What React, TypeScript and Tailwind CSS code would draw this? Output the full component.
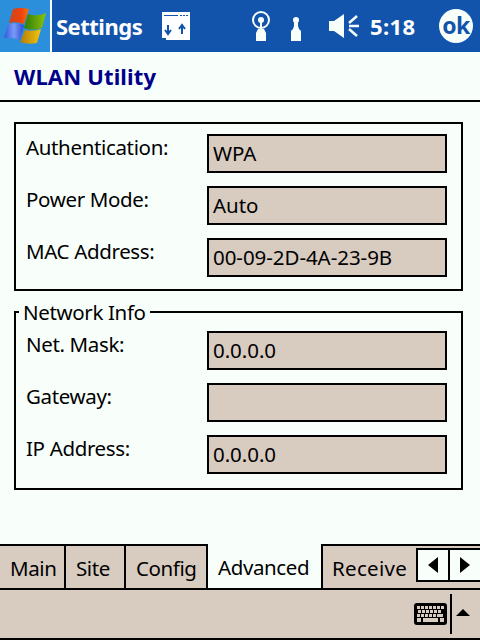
const font = "font-['Noto_Sans',sans-serif]";

const topFields = [
  { label: "Authentication:", value: "WPA" },
  { label: "Power Mode:", value: "Auto" },
  { label: "MAC Address:", value: "00-09-2D-4A-23-9B" },
];

const infoFields = [
  { label: "Net. Mask:", value: "0.0.0.0" },
  { label: "Gateway:", value: "" },
  { label: "IP Address:", value: "0.0.0.0" },
];

function Field({ label, value }: { label: string; value: string }) {
  return (
    <div className="flex h-[39px] items-start justify-between">
      <span className="text-[20.5px] leading-[26px] tracking-[-0.35px] text-black">{label}</span>
      <div className="flex h-[39px] w-[240px] items-center border-2 border-black bg-[#d8cbc0] pl-1 text-[20.5px] tracking-[-0.05px] text-black">
        {value}
      </div>
    </div>
  );
}

function WinLogo() {
  return (
    <svg width="50" height="52" viewBox="0 0 50 52">
      <defs>
        <linearGradient id="r" x1="0" x2="1" y1="0" y2="0">
          <stop offset="0" stopColor="#c9481a" />
          <stop offset="0.6" stopColor="#f0420c" />
          <stop offset="1" stopColor="#f4720a" />
        </linearGradient>
        <linearGradient id="g" x1="0" x2="1" y1="0" y2="0">
          <stop offset="0" stopColor="#2e7c08" />
          <stop offset="1" stopColor="#8cc20c" />
        </linearGradient>
        <linearGradient id="b" x1="0" x2="1" y1="0" y2="0">
          <stop offset="0" stopColor="#2f55e0" />
          <stop offset="0.5" stopColor="#7a9cf6" />
          <stop offset="1" stopColor="#2a48d0" />
        </linearGradient>
        <linearGradient id="y" x1="0" x2="1" y1="0" y2="0">
          <stop offset="0" stopColor="#b07c08" />
          <stop offset="1" stopColor="#f4c40c" />
        </linearGradient>
      </defs>
      <path d="M13 9Q20 7 29 9L24 24Q16 21 9 23z" fill="url(#r)" />
      <path d="M28 14Q37 17 46 13L42 28Q33 31 24 28z" fill="url(#g)" />
      <path d="M8 24Q16 22 24 25L20 40Q12 37 4 38z" fill="url(#b)" />
      <path d="M25 30Q33 32 41 29L37 43Q28 45 20 42z" fill="url(#y)" />
    </svg>
  );
}

function Keyboard() {
  const rows = [
    { y: 3, xs: [3, 7, 11, 15, 19, 23, 27] },
    { y: 7, xs: [4, 8, 12, 16, 20, 24] },
    { y: 11, xs: [3, 7, 11, 15, 19, 23, 26] },
  ];
  return (
    <svg width="33" height="22" viewBox="0 0 33 22" className="ml-auto">
      <rect width="33" height="22" rx="3" fill="#000" />
      {rows.map((r) => r.xs.map((x) => <rect key={`${r.y}-${x}`} x={x} y={r.y} width="3" height="3" fill="#d8cbc0" />))}
      <rect x="3" y="15" width="4" height="4" fill="#d8cbc0" />
      <rect x="9" y="15" width="15" height="4" fill="#d8cbc0" />
      <rect x="26" y="15" width="4" height="4" fill="#d8cbc0" />
    </svg>
  );
}

export default function App() {
  return (
    <div className={`flex h-[640px] w-[480px] flex-col overflow-hidden bg-[#f8fffb] ${font}`}>
      <div className="flex h-[52px] shrink-0 items-center bg-[#1254ac] text-white">
        <div className="h-[52px] w-[52px] shrink-0 border-r-2 border-[#f8fffb] bg-[#2b8fdb]">
          <WinLogo />
        </div>
        <span className="ml-[4px] w-[92px] text-[22px] font-bold tracking-[-0.5px]">Settings</span>
        <svg width="28" height="28" viewBox="0 0 28 28" className="ml-[14px]">
          <path d="M0 0h28v28H4v-2H0z" fill="#fff" />
          <path d="M2 3h14v1H2zM18 3h2v1h-2zM21 3h2v1h-2zM24 3h2v1h-2z" fill="#1254ac" />
          <path d="M6 13v8M3 18l3 4 3-4M20 22v-8M17 17l3-4 3 4" stroke="#1254ac" strokeWidth="2" fill="none" />
        </svg>
        <svg width="18" height="30" viewBox="0 0 18 30" className="ml-[62px]">
          <circle cx="9" cy="9" r="8" fill="none" stroke="#f8fffb" strokeWidth="2" />
          <circle cx="9" cy="9" r="3" fill="#f8fffb" />
          <path d="M8 10h2v8h2l2 4v8H4v-8l2-4h2z" fill="#f8fffb" />
        </svg>
        <svg width="10" height="24" viewBox="0 0 10 24" className="ml-[21px] mt-[6px]">
          <circle cx="5" cy="3" r="3" fill="#f8fffb" />
          <path d="M3 5h4v4l1 3 2 2v10H0V14l2-2 1-3z" fill="#f8fffb" />
        </svg>
        <svg width="30" height="24" viewBox="0 0 30 24" className="ml-[28px]">
          <path d="M0 7h5L15 0v24L5 17H0z" fill="#f8fffb" />
          <path d="M20 9l8-7M20 12h10M20 15l8 7" stroke="#f8fffb" strokeWidth="2.5" fill="none" />
        </svg>
        <span className="ml-[11px] text-[22px] font-bold tracking-[0.4px]">5:18</span>
        <div className="ml-auto mr-[7px] flex h-[34px] w-[34px] items-center justify-center rounded-full bg-[#f8fffb] pb-[2px] text-[23px] font-bold tracking-[-0.6px] text-[#1254ac]">
          ok
        </div>
      </div>

      <div className="flex h-[50px] shrink-0 items-center border-b-2 border-black pl-[14px] pt-[1px] text-[22px] font-bold tracking-[0.15px] text-[#00008b]">
        WLAN Utility
      </div>

      <div className="ml-[14px] mt-[20px] flex h-[169px] w-[449px] flex-col gap-[13px] border-2 border-black pb-2.5 pl-2.5 pr-3.5 pt-2.5">
        {topFields.map((f) => (
          <Field key={f.label} {...f} />
        ))}
      </div>

      <fieldset className="ml-[14px] mt-[8px] h-[191px] w-[449px] border-2 border-black px-2.5">
        <legend className="-ml-[7px] px-1 text-[20.5px] leading-[26px] tracking-[-0.35px] text-black">Network Info</legend>
        <div className="mt-[6px] flex flex-col gap-[13px] pr-1">
          {infoFields.map((f) => (
            <Field key={f.label} {...f} />
          ))}
        </div>
      </fieldset>

      <div className="flex-1" />

      <div className="flex h-[46px] shrink-0 text-[20.5px] tracking-[-0.4px] text-black">
        <div className="flex w-[66px] items-center border-y-2 border-r-2 border-black bg-[#d8cbc0] pl-[10px] pt-[3px]">Main</div>
        <div className="flex w-[60px] items-center border-y-2 border-r-2 border-black bg-[#d8cbc0] pl-[10px] pt-[3px]">Site</div>
        <div className="flex w-[82px] items-center border-y-2 border-r-2 border-black bg-[#d8cbc0] pl-[10px] pt-[3px]">Config</div>
        <div className="flex w-[113px] items-center border-b-2 border-black pl-[10px] pt-[3px]">Advanced</div>
        <div className="relative flex flex-1 items-center border-y-2 border-l-2 border-black bg-[#d8cbc0] pl-[9px] pt-[3px] tracking-[0.3px]">
          Receive
          <div className="absolute right-0 top-[2px] flex h-[34px] w-[64px] border-2 border-r-0 border-black bg-[#f8fffb]">
            <div className="flex flex-1 items-center justify-center border-r-2 border-black">
              <svg width="10" height="16" viewBox="0 0 10 16"><path d="M10 0v16L0 8z" fill="#000" /></svg>
            </div>
            <div className="flex flex-1 items-center justify-center">
              <svg width="10" height="16" viewBox="0 0 10 16"><path d="M0 0v16l10-8z" fill="#000" /></svg>
            </div>
          </div>
        </div>
      </div>

      <div className="flex h-[50px] shrink-0 items-center border-b-2 border-black bg-[#d8cbc0]">
        <Keyboard />
        <div className="ml-[3px] h-10 w-0.5 bg-black" />
        <svg width="14" height="7" viewBox="0 0 14 7" className="ml-[4px] mr-[10px] mb-[4px]"><path d="M7 0l7 7H0z" fill="#000" /></svg>
      </div>
    </div>
  );
}
